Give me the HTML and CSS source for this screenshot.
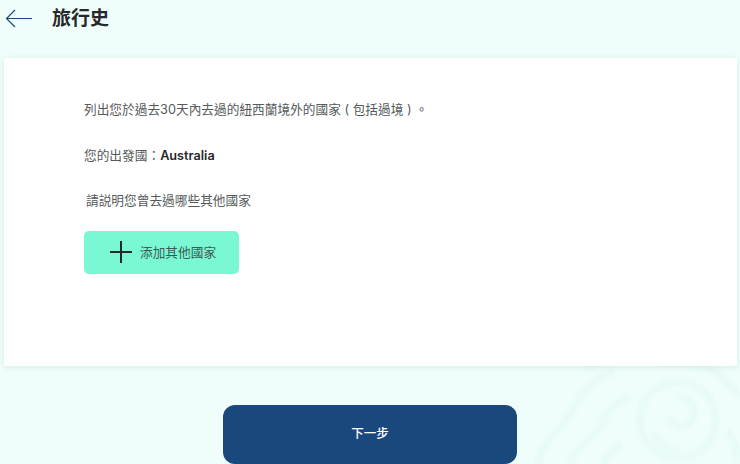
FILE: index.html
```html
<!DOCTYPE html>
<html lang="zh-Hant">
<head>
    <meta charset="UTF-8">
    <meta name="viewport" content="width=device-width, initial-scale=1.0">
    <title>旅行史</title>
    <link rel="stylesheet" href="styles.css">
</head>
<body>
    <svg class="pattern" viewBox="0 0 210 110" fill="none" stroke="#e8fbf6" stroke-width="8">
        <circle cx="148" cy="66" r="38"></circle>
        <path d="M148 44c14 0 20 12 14 22s-20 8-22-2"></path>
        <path d="M150 96c-14 0-22-8-26-18"></path>
        <path d="M8 110C14 84 30 78 40 60S60 22 84 18"></path>
        <path d="M40 110C44 94 62 88 72 70S84 48 100 44"></path>
        <path d="M74 110C76 100 84 94 92 90"></path>
        <path d="M56 14C76 4 96 2 116 6"></path>
        <path d="M130 8C170 4 196 20 210 44"></path>
        <path d="M196 78C206 84 208 98 206 110"></path>
    </svg>

    <header class="header">
        <svg class="back" viewBox="0 0 28 20" fill="none" stroke="#1a4a7c" stroke-width="1.2">
            <path d="M27 9.5H1.5M10 1L1.5 9.5L10 18"></path>
        </svg>
        <h1 class="title">旅行史</h1>
    </header>

    <main class="card">
        <p class="line">列出您於過去30天內去過的紐西蘭境外的國家 ( 包括過境 ) 。</p>
        <p class="line line-origin">您的出發國：<strong>Australia</strong></p>
        <p class="line line-other">請説明您曾去過哪些其他國家</p>
        <button class="btn-add">
            <svg class="plus" viewBox="0 0 22 22" fill="none" stroke="#1d2b2a" stroke-width="2">
                <path d="M11 0V22M0 11H22"></path>
            </svg>
            <span class="btn-add-label">添加其他國家</span>
        </button>
    </main>

    <div class="footer">
        <button class="btn-next">下一步</button>
    </div>
</body>
</html>
```

FILE: styles.css
```css
* {
    margin: 0;
    padding: 0;
    box-sizing: border-box;
    font-family: Inter, "Noto Sans CJK TC", sans-serif;
}

html,
body {
    height: 464px;
    overflow: hidden;
}

body {
    position: relative;
    background: #effefa;
    color: #555a5b;
}

.pattern {
    position: absolute;
    right: 0;
    bottom: 0;
    width: 210px;
    height: 110px;
    filter: blur(1.5px);
}

.header {
    position: relative;
    height: 58px;
    padding: 5px 0 0 5px;
    display: flex;
    align-items: flex-start;
    gap: 19px;
}

.back {
    width: 28px;
    height: 20px;
    margin-top: 4px;
}

.title {
    font-size: 19px;
    line-height: 28px;
    font-weight: 700;
    color: #26292b;
}

.card {
    position: relative;
    width: 733px;
    height: 308px;
    margin-left: 4px;
    padding: 42px 80px 0;
    background: #fff;
    box-shadow: 0 1px 6px rgba(40, 90, 80, 0.12);
}

.line {
    font-size: 12.7px;
    line-height: 20px;
}

.line-origin {
    margin-top: 26px;
}

.line-origin strong {
    color: #26292b;
    font-weight: 600;
}

.line-other {
    margin-top: 25px;
    padding-left: 2px;
}

.btn-add {
    margin-top: 20px;
    width: 155px;
    height: 43px;
    padding-left: 26px;
    display: flex;
    align-items: center;
    gap: 8px;
    background: #7af7d3;
    border: none;
    border-radius: 5px;
    color: #3d5a55;
    font-size: 12.7px;
}

.btn-add-label {
    margin-bottom: 3px;
}

.plus {
    width: 22px;
    height: 22px;
    margin-bottom: 1px;
}

.footer {
    position: relative;
    margin-top: 39px;
    display: flex;
    justify-content: center;
}

.btn-next {
    width: 294px;
    height: 59px;
    padding-bottom: 4px;
    background: #19497c;
    border: none;
    border-radius: 12px;
    color: #fff;
    font-size: 12.5px;
    font-weight: 500;
}
```
